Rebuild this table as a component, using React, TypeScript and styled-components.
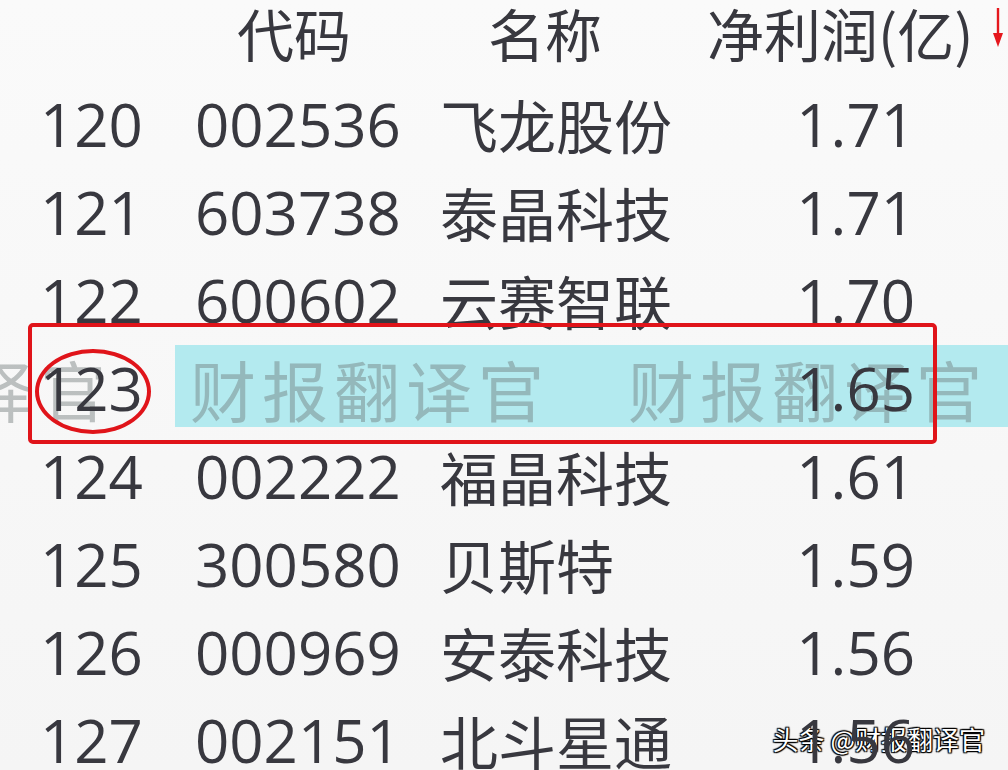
import { createGlobalStyle, styled } from 'styled-components';

const GlobalStyle = createGlobalStyle`
  html, body {
    margin: 0;
    padding: 0;
    height: 100%;
    overflow: hidden;
    background: #f8f8f8;
  }
  body {
    font-family: "Open Sans", "Noto Sans CJK SC", sans-serif;
    color: #38383f;
  }
`;

const columns = '155px 245px 270px 205px 1fr';

const Page = styled.div`
  position: relative;
  width: 1008px;
  height: 770px;
  overflow: hidden;
  background: linear-gradient(#fafafa, #f5f5f5);
`;

const HeaderRow = styled.div`
  display: grid;
  grid-template-columns: ${columns};
  align-items: center;
  padding: 0 0 16px 40px;
  height: 80px;
  box-sizing: border-box;
  font-family: "Noto Sans CJK SC", sans-serif;
  font-size: 57px;
  line-height: 1;
  white-space: nowrap;
`;

const HeaderCell = styled.div<{ $pad?: number }>`
  padding-left: ${(p) => p.$pad ?? 0}px;
`;

const SortHeader = styled.div`
  grid-column: 4 / span 2;
  display: flex;
  align-items: center;
  gap: 18px;
  margin-left: -3px;
`;

const Arrow = styled.svg`
  flex: none;
  margin-top: -8px;
`;

const Row = styled.div<{ $hl?: boolean }>`
  position: relative;
  display: grid;
  grid-template-columns: ${columns};
  padding-left: 40px;
  height: 88px;
  line-height: 88px;
  white-space: nowrap;

  &::before {
    content: '';
    display: ${(p) => (p.$hl ? 'block' : 'none')};
    position: absolute;
    left: 175px;
    right: 0;
    top: 1px;
    bottom: 5px;
    background: #b3eaef;
  }
`;

const Num = styled.div<{ $right?: boolean }>`
  position: relative;
  z-index: 2;
  font-family: "Open Sans", sans-serif;
  font-size: 60px;
  text-align: ${(p) => (p.$right ? 'right' : 'left')};
`;

const Name = styled.div`
  position: relative;
  z-index: 2;
  font-family: "Noto Sans CJK SC", sans-serif;
  font-size: 58px;
`;

const Watermark = styled.div`
  position: absolute;
  z-index: 1;
  top: 0;
  bottom: 0;
  left: -248px;
  display: flex;
  align-items: center;
  font-family: "Noto Sans CJK SC", sans-serif;
  font-size: 66px;
  line-height: 1;
  letter-spacing: 6px;
  color: rgba(105, 115, 115, 0.42);
  pointer-events: none;
`;

const Mark = styled.span`
  margin-right: 78px;
`;

const Frame = styled.div`
  position: absolute;
  z-index: 3;
  left: 28px;
  right: 71px;
  top: -21px;
  bottom: -12px;
  border: 4px solid #e0141a;
  border-radius: 5px;
`;

const Ring = styled.div`
  position: absolute;
  z-index: 3;
  left: 35px;
  top: 5px;
  width: 108px;
  height: 77px;
  border: 4px solid #e0141a;
  border-radius: 50%;
`;

const Credit = styled.div`
  position: absolute;
  right: 23px;
  bottom: 18px;
  font-family: "Noto Sans CJK SC", sans-serif;
  font-size: 26px;
  line-height: 1;
  color: #fff;
  text-shadow: 0 0 2px #000, 1px 1px 1px #000, -1px -1px 1px #000, 1px -1px 1px #000, -1px 1px 1px #000;
`;

const stocks = [
  { no: '120', code: '002536', name: '飞龙股份', profit: '1.71' },
  { no: '121', code: '603738', name: '泰晶科技', profit: '1.71' },
  { no: '122', code: '600602', name: '云赛智联', profit: '1.70' },
  { no: '123', code: '', name: '', profit: '1.65', hl: true },
  { no: '124', code: '002222', name: '福晶科技', profit: '1.61' },
  { no: '125', code: '300580', name: '贝斯特', profit: '1.59' },
  { no: '126', code: '000969', name: '安泰科技', profit: '1.56' },
  { no: '127', code: '002151', name: '北斗星通', profit: '1.56' },
];

const SortArrow = () => (
  <Arrow width="12" height="40" viewBox="0 0 12 40">
    <line x1="6" y1="0" x2="6" y2="28" stroke="#e5171d" strokeWidth="2.4" />
    <polygon points="1,25 11,25 6,39" fill="#e5171d" />
  </Arrow>
);

export default function App() {
  return (
    <Page>
      <GlobalStyle />
      <HeaderRow>
        <HeaderCell />
        <HeaderCell $pad={42}>代码</HeaderCell>
        <HeaderCell $pad={48}>名称</HeaderCell>
        <SortHeader>
          <span>净利润(亿)</span>
          <SortArrow />
        </SortHeader>
      </HeaderRow>
      {stocks.map((s) => (
        <Row key={s.no} $hl={s.hl}>
          {s.hl && (
            <>
              <Watermark>
                <Mark>财报翻译官</Mark>
                <Mark>财报翻译官</Mark>
                <Mark>财报翻译官</Mark>
              </Watermark>
              <Frame />
              <Ring />
            </>
          )}
          <Num>{s.no}</Num>
          <Num>{s.code}</Num>
          <Name>{s.name}</Name>
          <Num $right>{s.profit}</Num>
        </Row>
      ))}
      <Credit>头条 @财报翻译官</Credit>
    </Page>
  );
}
